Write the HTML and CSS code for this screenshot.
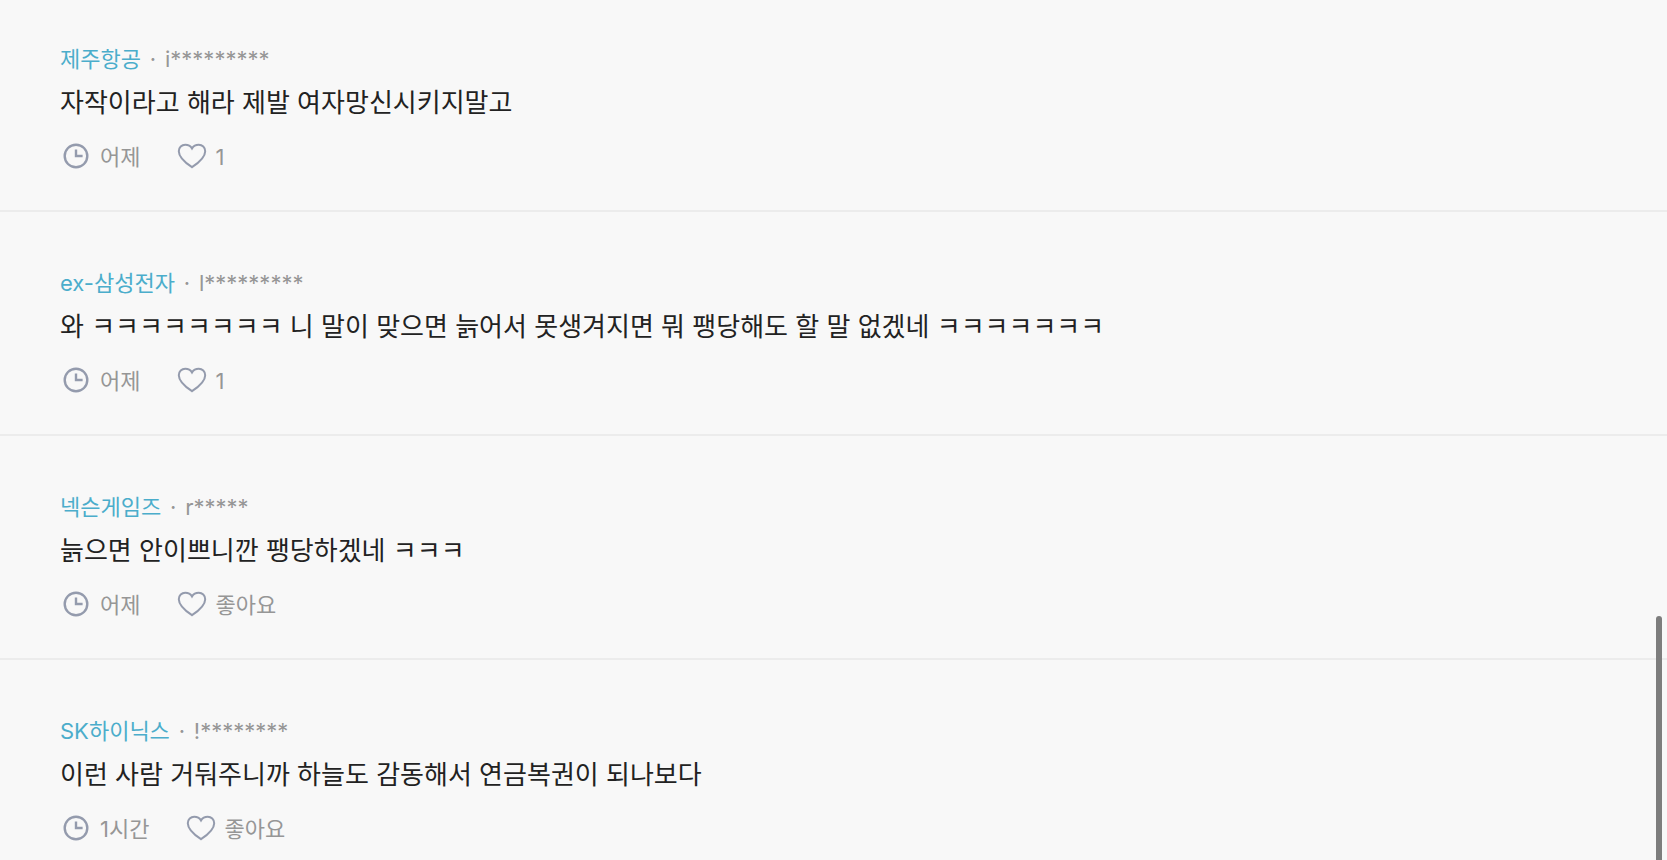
FILE: index.html
```html
<!DOCTYPE html>
<html lang="ko">
<head>
<meta charset="utf-8">
<meta name="viewport" content="width=device-width, initial-scale=1">
<title>댓글</title>
<link rel="stylesheet" href="styles.css">
</head>
<body>
<svg class="sprite" aria-hidden="true">
  <symbol id="clock" viewBox="0 0 32 32"><circle cx="16" cy="15" r="11.3"/><path d="M16 8.4V15h6.6"/></symbol>
  <symbol id="heart" viewBox="0 0 32 32"><path d="M16 26.2C13.6 24.6 2.8 17 2.8 10.2C2.8 6.3 5.8 3.7 9.2 3.7C12.2 3.7 14.6 5 16 7.4C17.4 5 19.8 3.7 22.8 3.7C26.2 3.7 29.2 6.3 29.2 10.2C29.2 17 18.4 24.6 16 26.2Z"/></symbol>
</svg>
<main class="comments">
  <article class="comment">
    <p class="author"><a class="company" href="#">제주항공</a><span class="dot">·</span><span>i*********</span></p>
    <p class="message">자작이라고 해라 제발 여자망신시키지말고</p>
    <div class="meta">
      <span class="meta-item"><svg class="icon clock"><use href="#clock"/></svg>어제</span>
      <button class="meta-item like" type="button"><svg class="icon"><use href="#heart"/></svg>1</button>
    </div>
  </article>
  <article class="comment">
    <p class="author"><a class="company" href="#">ex-삼성전자</a><span class="dot">·</span><span>l*********</span></p>
    <p class="message">와 ㅋㅋㅋㅋㅋㅋㅋㅋ 니 말이 맞으면 늙어서 못생겨지면 뭐 팽당해도 할 말 없겠네 ㅋㅋㅋㅋㅋㅋㅋ</p>
    <div class="meta">
      <span class="meta-item"><svg class="icon clock"><use href="#clock"/></svg>어제</span>
      <button class="meta-item like" type="button"><svg class="icon"><use href="#heart"/></svg>1</button>
    </div>
  </article>
  <article class="comment">
    <p class="author"><a class="company" href="#">넥슨게임즈</a><span class="dot">·</span><span>r*****</span></p>
    <p class="message">늙으면 안이쁘니깐 팽당하겠네 ㅋㅋㅋ</p>
    <div class="meta">
      <span class="meta-item"><svg class="icon clock"><use href="#clock"/></svg>어제</span>
      <button class="meta-item like" type="button"><svg class="icon"><use href="#heart"/></svg>좋아요</button>
    </div>
  </article>
  <article class="comment">
    <p class="author"><a class="company" href="#">SK하이닉스</a><span class="dot">·</span><span>!********</span></p>
    <p class="message">이런 사람 거둬주니까 하늘도 감동해서 연금복권이 되나보다</p>
    <div class="meta">
      <span class="meta-item"><svg class="icon clock"><use href="#clock"/></svg>1시간</span>
      <button class="meta-item like" type="button"><svg class="icon"><use href="#heart"/></svg>좋아요</button>
    </div>
  </article>
</main>
<div class="scroll-thumb" aria-hidden="true"></div>
</body>
</html>
```
FILE: styles.css
```css
* {
  box-sizing: border-box;
}

body {
  position: relative;
  height: 100vh;
  margin: 0;
  overflow: hidden;
  background: #f8f8f8;
  color: #222;
  font-family: Inter, "Noto Sans CJK KR", sans-serif;
  font-size: 22px;
}

.sprite {
  display: none;
}

.comment {
  padding: 56px 60px 37px;
  border-bottom: 2px solid #ececec;
}

.comment:first-child {
  padding-top: 44px;
}

.author {
  display: flex;
  margin: 0 0 9px;
  color: #969696;
  line-height: 30px;
}

.company {
  color: #4badcb;
  text-decoration: none;
}

.dot {
  width: 24px;
  text-align: center;
}

.message {
  margin: 0 0 22px;
  font-family: "Noto Sans CJK KR", sans-serif;
  font-size: 26px;
  line-height: 36px;
}

.meta {
  display: flex;
  gap: 36px;
}

.meta-item {
  display: flex;
  align-items: center;
  gap: 8px;
  color: #969696;
  line-height: 32px;
}

.like {
  gap: 7px;
  padding: 0;
  border: 0;
  background: none;
  font: inherit;
  line-height: 32px;
}

.icon {
  width: 32px;
  height: 32px;
  fill: none;
  stroke: #949bad;
  stroke-width: 2;
}

.clock {
  stroke-width: 2.4;
}

.scroll-thumb {
  position: absolute;
  top: 616px;
  right: 5px;
  bottom: 0;
  width: 6px;
  border-radius: 3px 3px 0 0;
  background: #7d7d7d;
}
```
